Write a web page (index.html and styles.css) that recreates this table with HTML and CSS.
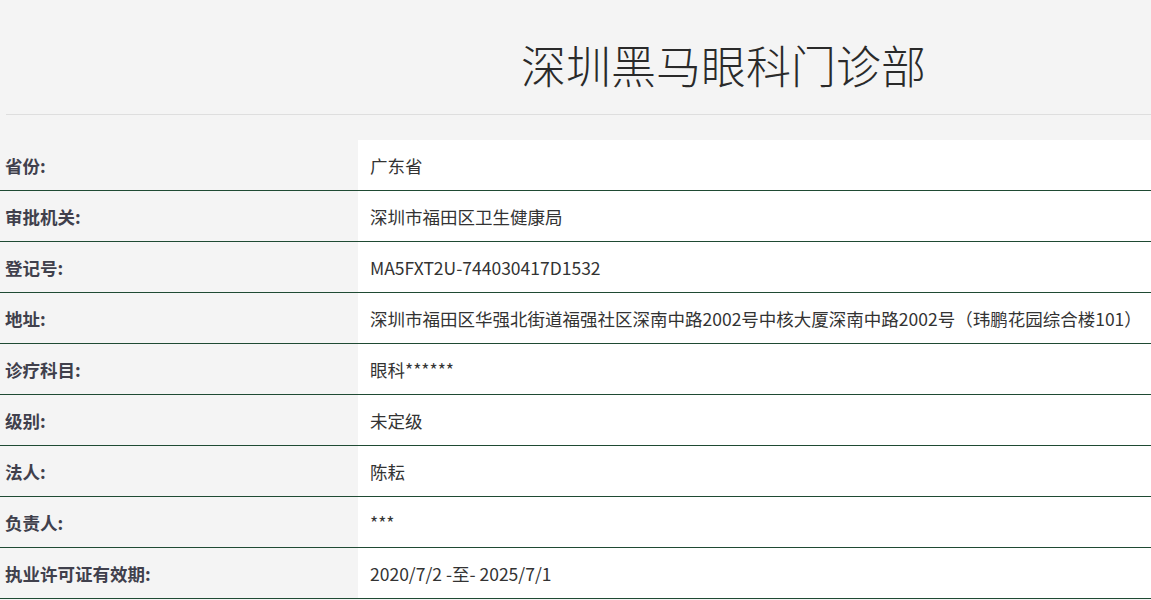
FILE: index.html
```html
<!DOCTYPE html>
<html lang="zh-CN">
<head>
<meta charset="utf-8">
<link rel="stylesheet" href="styles.css">
</head>
<body>
<header class="page-head">
  <h1 class="title">深圳黑马眼科门诊部</h1>
</header>
<div class="rule"></div>
<div class="info">
  <div class="row"><div class="label">省份:</div><div class="value">广东省</div></div>
  <div class="row"><div class="label">审批机关:</div><div class="value">深圳市福田区卫生健康局</div></div>
  <div class="row"><div class="label">登记号:</div><div class="value">MA5FXT2U-744030417D1532</div></div>
  <div class="row"><div class="label">地址:</div><div class="value">深圳市福田区华强北街道福强社区深南中路2002号中核大厦深南中路2002号（玮鹏花园综合楼101）</div></div>
  <div class="row"><div class="label">诊疗科目:</div><div class="value">眼科******</div></div>
  <div class="row"><div class="label">级别:</div><div class="value">未定级</div></div>
  <div class="row"><div class="label">法人:</div><div class="value">陈耘</div></div>
  <div class="row"><div class="label">负责人:</div><div class="value">***</div></div>
  <div class="row"><div class="label">执业许可证有效期:</div><div class="value">2020/7/2 -至- 2025/7/1</div></div>
</div>
</body>
</html>
```
FILE: styles.css
```css
html, body {
  margin: 0;
  padding: 0;
  background: #f4f4f4;
  font-family: "Noto Sans CJK SC", "Noto Sans", sans-serif;
  overflow: hidden;
}
.page-head {
  height: 100px;
  padding-top: 14px;
  display: flex;
  align-items: center;
}
.title {
  margin: 0;
  padding-left: 521px;
  font-size: 45px;
  font-weight: 300;
  color: #2a2a2a;
  line-height: 1;
  letter-spacing: 0;
}
.rule {
  height: 1px;
  margin-left: 6px;
  background: #dedede;
}
.info {
  margin-top: 25px;
}
.row {
  display: flex;
  height: 50px;
  border-bottom: 1px solid #1f4a33;
}
.label {
  width: 353px;
  padding-left: 5px;
  display: flex;
  align-items: center;
  font-size: 17.5px;
  font-weight: 700;
  color: #40404c;
}
.value {
  flex: 1;
  background: #ffffff;
  padding-left: 12px;
  display: flex;
  align-items: center;
  font-size: 17.5px;
  color: #333333;
  white-space: nowrap;
}
```
